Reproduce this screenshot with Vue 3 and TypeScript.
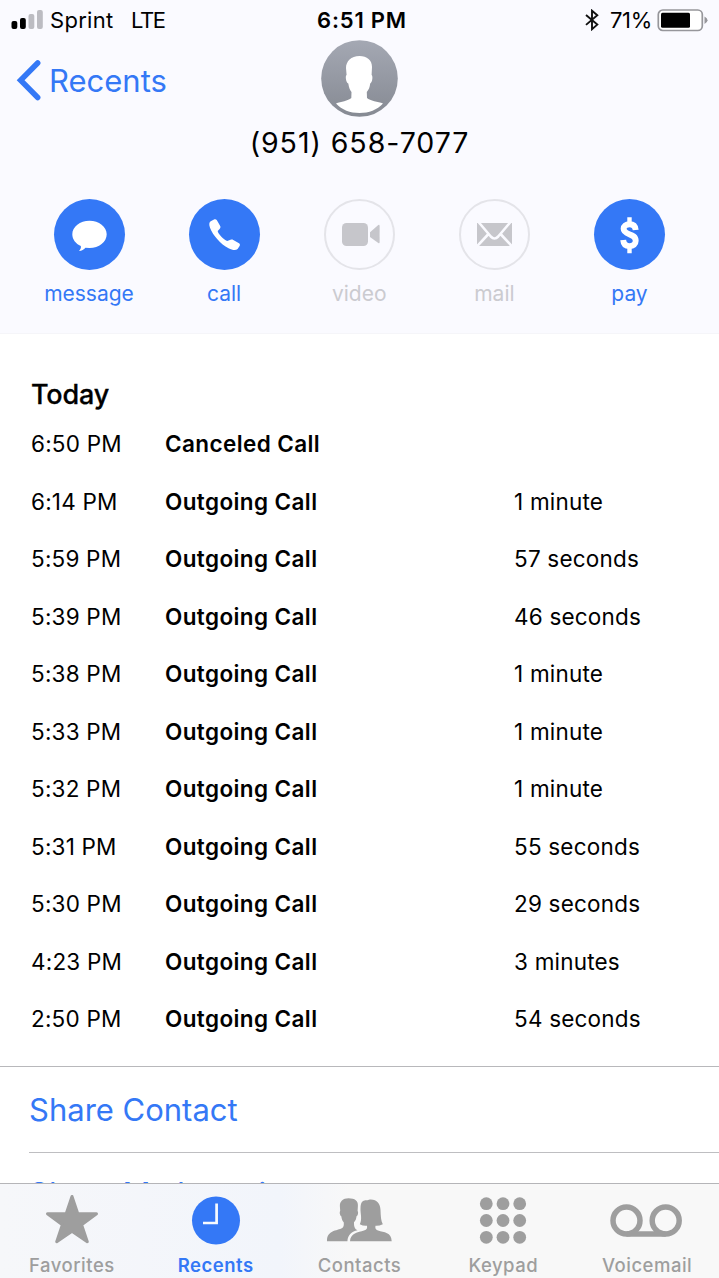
<script setup lang="ts">
interface CallEntry {
  time: string
  kind: string
  duration: string
}

interface Action {
  id: string
  enabled: boolean
}

interface Tab {
  id: string
  label: string
}

const actions: Action[] = [
  { id: 'message', enabled: true },
  { id: 'call', enabled: true },
  { id: 'video', enabled: false },
  { id: 'mail', enabled: false },
  { id: 'pay', enabled: true },
]

const calls: CallEntry[] = [
  { time: '6:50 PM', kind: 'Canceled Call', duration: '' },
  { time: '6:14 PM', kind: 'Outgoing Call', duration: '1 minute' },
  { time: '5:59 PM', kind: 'Outgoing Call', duration: '57 seconds' },
  { time: '5:39 PM', kind: 'Outgoing Call', duration: '46 seconds' },
  { time: '5:38 PM', kind: 'Outgoing Call', duration: '1 minute' },
  { time: '5:33 PM', kind: 'Outgoing Call', duration: '1 minute' },
  { time: '5:32 PM', kind: 'Outgoing Call', duration: '1 minute' },
  { time: '5:31 PM', kind: 'Outgoing Call', duration: '55 seconds' },
  { time: '5:30 PM', kind: 'Outgoing Call', duration: '29 seconds' },
  { time: '4:23 PM', kind: 'Outgoing Call', duration: '3 minutes' },
  { time: '2:50 PM', kind: 'Outgoing Call', duration: '54 seconds' },
]

const tabs: Tab[] = [
  { id: 'favorites', label: 'Favorites' },
  { id: 'recents', label: 'Recents' },
  { id: 'contacts', label: 'Contacts' },
  { id: 'keypad', label: 'Keypad' },
  { id: 'voicemail', label: 'Voicemail' },
]
const activeTab = 'recents'
const keys = [0, 1, 2, 3, 4, 5, 6, 7, 8]
</script>

<template>
  <div class="screen">
    <header class="header">
      <div class="status">
        <div class="status-left">
          <svg class="signal" width="32" height="20" viewBox="0 0 32 20">
            <rect x="0.500" y="11" width="5.800" height="8" rx="2" fill="#000" />
            <rect x="9" y="8" width="5.800" height="11" rx="2" fill="#000" />
            <rect x="17.500" y="4" width="5.800" height="15" rx="2" fill="#bcbcc2" />
            <rect x="26" y="0" width="5.800" height="19" rx="2" fill="#bcbcc2" />
          </svg>
          <span class="carrier">Sprint</span>
          <span class="network">LTE</span>
        </div>
        <div class="clock">6:51 PM</div>
        <div class="status-right">
          <svg width="14" height="22" viewBox="0 0 14 22" fill="none" stroke="#111" stroke-width="1.9">
            <path d="M1 6 L12.3 15.6 L7 20.2 V1.7 L12.3 6.3 L1 15.9" />
          </svg>
          <span class="percent">71%</span>
          <svg class="battery" width="51" height="23" viewBox="0 0 51 23">
            <rect x="1.300" y="1" width="44" height="20.500" rx="4.500" fill="#fff" stroke="#96969b" stroke-width="1.700" />
            <rect x="4" y="3.800" width="29" height="15" rx="1.500" fill="#000" />
            <path d="M47.500 7.500 Q50.500 9 50.500 11.300 T47.500 15 Z" fill="#96969b" />
          </svg>
        </div>
      </div>

      <div class="nav">
        <a class="back">
          <svg width="26" height="42" viewBox="0 0 26 42" fill="none" stroke="#3478f6" stroke-width="5.500" stroke-linecap="round">
            <path d="M21.700 4 L4.600 21.300 L21.700 38.500" />
          </svg>
          <span>Recents</span>
        </a>
        <svg class="avatar" width="77" height="77" viewBox="0 0 77 77">
          <defs>
            <linearGradient id="avatarShade" x1="0" y1="0" x2="0" y2="1">
              <stop offset="0" stop-color="#a4a8b3" />
              <stop offset="1" stop-color="#868a93" />
            </linearGradient>
          </defs>
          <circle cx="38.500" cy="38.500" r="38.300" fill="url(#avatarShade)" />
          <path fill="#fff" d="M38.500 16 C30 16 25 21.500 25 28 L25.600 35 C24 36 25 42.500 27.300 43.500 C28 48 29 50 30.500 52 L30.300 58 C27 61 20 61.500 15 63.500 C21 70 29 73 38.500 73 C48 73 56 70 62 63.500 C57 61.500 49 61 46 58 L45.800 52 C48 49.500 48.700 47 49.200 43.500 C51.600 42 52 36 50.600 35 L51 27 C51 20 46 16 38.500 16 Z" />
        </svg>
      </div>
      <h1 class="number">(951) 658-7077</h1>

      <div class="actions">
        <div v-for="action in actions" :key="action.id" class="action" :class="{ disabled: !action.enabled }">
          <div class="bubble">
            <svg width="71" height="71" viewBox="0 0 71 71">
              <path v-if="action.id === 'message'" fill="#fff" d="M35.500 21.700 C45 21.700 52.700 27.800 52.700 35.300 C52.700 43 45 49 35.500 49 L31.500 48.700 C29.800 50.700 27.800 51.700 25 51.900 C26.500 50.500 27.300 48.800 26.800 47.100 C21.700 44.800 18.300 40.300 18.300 35.300 C18.300 27.800 26 21.700 35.500 21.700 Z" />
              <path v-else-if="action.id === 'call'" fill="#fff" d="M21.700 22.300 L25 20.400 C26.200 19.900 27.300 20.300 27.900 21.300 L31.200 27 C31.700 28 31.500 29 30.600 29.900 L28.700 32 C28.500 34.200 35.500 41.600 38.300 41.900 L41.500 40.700 C42.600 40.300 43.500 40.400 44.300 40.900 L50 44.200 C51 44.900 51.200 46 50.600 47 L48.600 50 C47 51.600 43.500 51.400 39.500 49.300 C31.500 45 24 36.500 21 28.700 C19.900 25.500 20 23.500 21.700 22.300 Z" />
              <g v-else-if="action.id === 'video'" fill="#c6c6cb">
                <rect x="18" y="24" width="26" height="23" rx="4.500" />
                <path d="M46 33.200 L54.300 26 Q55.600 25.200 55.600 27 V43 Q55.600 44.800 54.300 44 L46 38 Z" />
              </g>
              <g v-else-if="action.id === 'mail'">
                <rect x="18" y="24" width="35" height="23" fill="#c6c6cb" />
                <path d="M19.500 23 L31.800 37.500 Q35.500 41.500 39.200 37.500 L51.500 23 M17.500 47.800 L29 35.500 M53.500 47.800 L42 35.500" fill="none" stroke="#fafaff" stroke-width="2.600" />
              </g>
              <g v-else fill="none" stroke="#fff">
                <path d="M35.500 18.200 V24.500 M35.500 48 V54.200" stroke-width="4.400" />
                <path d="M41.700 31 C41.300 26.600 39 25.300 35.500 25.300 C31.700 25.300 29.600 27 29.600 29.800 C29.600 36.600 41.700 33.700 41.700 41.800 C41.700 45.200 39.300 47.100 35.500 47.100 C31.500 47.100 29.500 45.200 29.200 41" stroke-width="5.900" />
              </g>
            </svg>
          </div>
          <span class="action-label">{{ action.id }}</span>
        </div>
      </div>
    </header>

    <main>
      <section class="history">
        <h2>Today</h2>
        <div v-for="(call, i) in calls" :key="i" class="call-row">
          <span class="time">{{ call.time }}</span>
          <span class="kind">{{ call.kind }}</span>
          <span class="duration">{{ call.duration }}</span>
        </div>
      </section>
      <section class="links">
        <a>Share Contact</a>
        <a>Share My Location</a>
      </section>
    </main>

    <nav class="tabs">
      <div v-for="tab in tabs" :key="tab.id" class="tab" :class="{ active: tab.id === activeTab }">
        <svg width="76" height="56" viewBox="0 0 76 56" fill="currentColor">
          <path v-if="tab.id === 'favorites'" stroke="currentColor" stroke-width="3" stroke-linejoin="round" d="M38 5.500 L43.800 22.700 L62.500 22.700 L47.600 33.700 L53.300 50.700 L38 40.200 L22.700 50.700 L28.400 33.700 L13.500 22.700 L32.200 22.700 Z" />
          <g v-else-if="tab.id === 'recents'">
            <circle cx="38" cy="29.500" r="24" />
            <path d="M38.600 12.500 V32 H25" fill="none" stroke="#f7fafe" stroke-width="2.700" />
          </g>
          <g v-else-if="tab.id === 'contacts'">
            <path d="M27.500 7.300 C22 7.300 18.500 10.500 18.900 15.500 L19.200 20 C18.300 21 18.800 24.500 20.300 25.300 C20.700 28.300 21.500 30 22.700 31.200 C23 33.500 22.800 35 22 36.200 C18.500 40 5.500 38 6 50.300 H26.400 C26.700 43.500 31 40.500 36.500 39.200 C34 38 32.800 36 33 31.200 C34.500 29.800 35.300 28 35.500 25.300 C37.200 24.500 37.500 21 36.600 20 L36.900 14.800 C37.200 10 34 7.300 27.500 7.300 Z" />
            <path d="M41 11 C43 8.500 46 9.700 48 8.700 C55.500 7.800 59.300 12.500 59.500 19 C59.700 25 60 30 61.800 33.200 Q58 35 54.500 34.700 C54 37 54.500 38.500 57 39.500 C63 41.500 70.500 41 70.700 50.300 H29 C29.300 42 37 41.500 43 39.500 C46 38.500 46.400 37 46 34.700 Q42 35 38.800 33.200 C41.500 28 39.200 22 39.500 17 C39.600 14.200 40 12.300 41 11 Z" />
          </g>
          <g v-else-if="tab.id === 'keypad'">
            <circle v-for="k in keys" :key="k" :cx="21.300 + (k % 3) * 16.700" :cy="12.700 + Math.floor(k / 3) * 16.800" r="6.400" />
          </g>
          <g v-else fill="none" stroke="currentColor" stroke-width="5.500">
            <circle cx="17.500" cy="29.500" r="13.500" />
            <circle cx="56.700" cy="29.500" r="13.500" />
            <path d="M17.500 43 H56.700" />
          </g>
        </svg>
        <span>{{ tab.label }}</span>
      </div>
    </nav>
  </div>
</template>

<style>
html,
body {
  margin: 0;
  overflow: hidden;
}
</style>

<style scoped>
.screen {
  position: relative;
  width: 719px;
  height: 1278px;
  overflow: hidden;
  background: #fff;
  color: #000;
  font-family: Inter, "Liberation Sans", sans-serif;
}

.header {
  height: 334px;
  background: #fafaff;
  border-bottom: 1px solid #f5f5f9;
  box-sizing: border-box;
}

.status {
  display: grid;
  grid-template-columns: 1fr auto 1fr;
  align-items: center;
  height: 40px;
  padding: 0 11px;
  box-sizing: border-box;
  font-size: 22px;
}

.status-left,
.status-right {
  display: flex;
  align-items: center;
}

.status-right {
  justify-content: flex-end;
}

.carrier {
  margin-left: 7px;
  letter-spacing: 0.300px;
}

.network {
  margin-left: 17.500px;
  letter-spacing: -1.400px;
}

.clock {
  padding-left: 5px;
  font-weight: 600;
  letter-spacing: 0.800px;
}

.percent {
  margin: 0 5px 0 11px;
  letter-spacing: -0.300px;
}

.nav {
  display: grid;
  grid-template-columns: 1fr 77px 1fr;
  height: 77px;
  align-items: center;
}

.back {
  display: flex;
  align-items: center;
  gap: 7px;
  padding-left: 16px;
  margin-top: 3px;
  color: #3478f6;
  font-size: 31px;
}

.number {
  margin: 8px 0 0;
  height: 36px;
  line-height: 36px;
  text-align: center;
  font-size: 28.500px;
  font-weight: 400;
  letter-spacing: 0.950px;
}

.actions {
  display: flex;
  justify-content: space-between;
  padding: 38px 22px 0 21.500px;
}

.action {
  display: flex;
  flex-direction: column;
  align-items: center;
  width: 135px;
  color: #3478f6;
}

.bubble {
  box-sizing: border-box;
  width: 71px;
  height: 71px;
  border-radius: 50%;
  background: #3478f6;
}

.bubble svg {
  display: block;
}

.disabled .bubble {
  border: 2px solid #e4e4e9;
  background: transparent;
}

.disabled .bubble svg {
  margin: -2px;
}

.disabled {
  color: #cbcbd0;
}

.action-label {
  margin-top: 10px;
  line-height: 28px;
  font-size: 21px;
}

.history {
  height: 733px;
  padding: 44px 31px 0;
  box-sizing: border-box;
  border-bottom: 1px solid #b8b8bb;
}

.history h2 {
  margin: 0;
  height: 37px;
  line-height: 34px;
  font-size: 27px;
  font-weight: 500;
  letter-spacing: -0.150px;
  -webkit-text-stroke: 0.300px #000;
}

.call-row {
  display: grid;
  grid-template-columns: 134px 349px 1fr;
  align-items: center;
  height: 57.500px;
  font-size: 22.500px;
}

.time,
.duration {
  letter-spacing: 0.200px;
}

.kind {
  font-weight: 600;
  letter-spacing: 0.400px;
}

.links {
  padding-left: 29px;
}

.links a {
  display: flex;
  align-items: center;
  height: 85px;
  border-bottom: 1px solid #bebec1;
  color: #3478f6;
  font-size: 31px;
}

.links a:last-child {
  height: 81px;
}

.tabs {
  position: absolute;
  inset: auto 0 0;
  display: grid;
  grid-template-columns: repeat(5, 1fr);
  height: 95px;
  box-sizing: border-box;
  border-top: 1px solid #b5b5b8;
  background: linear-gradient(90deg, #f6f7fa 0, #f2f5fb 280px, #f8f8f8 350px);
}

.tab {
  display: flex;
  flex-direction: column;
  align-items: center;
  padding-top: 7px;
  color: #9e9e9e;
}

.tab svg {
  display: block;
}

.tab span {
  line-height: 24px;
  margin-top: 6px;
  font-size: 18.500px;
  font-weight: 500;
  letter-spacing: 0.500px;
}

.tab.active {
  color: #3478f6;
}

.tab.active span {
  font-weight: 600;
}
</style>
